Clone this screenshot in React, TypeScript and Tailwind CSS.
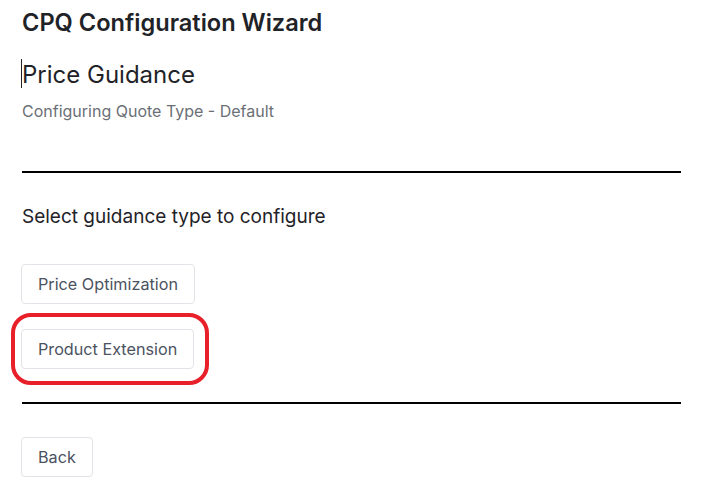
import React from "react";

const GuidanceButton: React.FC<{ label: string; highlighted?: boolean }> = ({
  label,
  highlighted,
}) => (
  <div className="relative self-start -ml-px">
    <button className="h-10 px-4 rounded border border-[#e2e3e8] bg-white text-[16.2px] font-normal text-[#4b5260]">
      {label}
    </button>
    {highlighted && (
      <div className="absolute -left-[10px] -right-[15px] -top-[16px] -bottom-[16px] rounded-[20px] border-[4px] border-[#e8202a] pointer-events-none" />
    )}
  </div>
);

export default function App() {
  return (
    <div className="w-[709px] h-[494px] bg-white font-['Inter',sans-serif] pl-[22px] pr-[28px] pt-[8px]">
      <h1 className="text-[23.6px] leading-[30px] font-semibold text-[#1f2328]">
        CPQ Configuration Wizard
      </h1>

      <div className="relative mt-[23px]">
        <span className="absolute -left-[1px] top-[-2px] w-px h-[29px] bg-[#222]" />
        <h2 className="text-[24px] leading-[28px] text-[#1f2328]">Price Guidance</h2>
      </div>
      <p className="mt-[12px] text-[16px] leading-[20px] text-[#6b6f76]">
        Configuring Quote Type - Default
      </p>

      <hr className="mt-[50px] border-t-2 border-black" />

      <p className="mt-[32px] text-[19px] leading-[24px] text-[#1f2328]">
        Select guidance type to configure
      </p>

      <div className="mt-[35px] flex flex-col gap-[25px]">
        <GuidanceButton label="Price Optimization" />
        <GuidanceButton label="Product Extension" highlighted />
      </div>

      <hr className="mt-[33px] border-t-2 border-black" />

      <div className="mt-[33px] -ml-px">
        <button className="h-10 px-4 rounded border border-[#e2e3e8] bg-white text-[16.2px] font-normal text-[#4b5260]">
          Back
        </button>
      </div>
    </div>
  );
}
